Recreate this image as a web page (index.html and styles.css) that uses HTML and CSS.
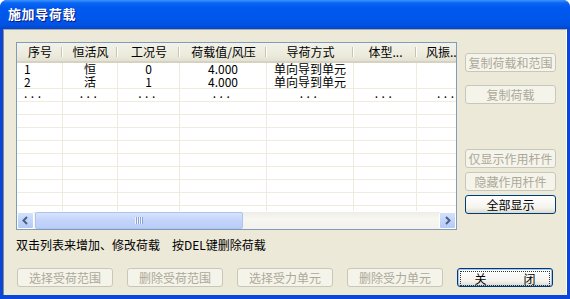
FILE: index.html
```html
<!DOCTYPE html>
<html lang="zh-CN">
<head>
    <meta charset="UTF-8">
    <title>施加导荷载</title>
    <link rel="stylesheet" href="styles.css">
</head>
<body>
<div class="window">
    <div class="title">施加导荷载</div>
    <div class="client">
        <div class="top">
            <div class="list">
                <div class="grid">
                    <div class="hd">序号</div>
                    <div class="hd">恒活风</div>
                    <div class="hd">工况号</div>
                    <div class="hd">荷载值/风压</div>
                    <div class="hd">导荷方式</div>
                    <div class="hd">体型...</div>
                    <div class="hd last">风振...</div>

                    <div class="cell first l">1</div>
                    <div class="cell first">恒</div>
                    <div class="cell first">0</div>
                    <div class="cell first">4.000</div>
                    <div class="cell first">单向导到单元</div>
                    <div class="cell first"></div>
                    <div class="cell first"></div>

                    <div class="cell l">2</div>
                    <div class="cell">活</div>
                    <div class="cell">1</div>
                    <div class="cell">4.000</div>
                    <div class="cell">单向导到单元</div>
                    <div class="cell"></div>
                    <div class="cell"></div>

                    <div class="cell l"><span class="dots">...</span></div>
                    <div class="cell"><span class="dots">...</span></div>
                    <div class="cell"><span class="dots">...</span></div>
                    <div class="cell"><span class="dots">...</span></div>
                    <div class="cell"><span class="dots">...</span></div>
                    <div class="cell"><span class="dots">...</span></div>
                    <div class="cell last"><span class="dots">...</span></div>
                </div>
                <div class="filler"></div>
                <div class="hscroll">
                    <div class="sbtn">
                        <svg width="7" height="9" viewBox="0 0 7 9"><path d="M5 1 L1.5 4.5 L5 8" fill="none" stroke="#4D6185" stroke-width="2"/></svg>
                    </div>
                    <div class="thumb"><span class="grip"></span></div>
                    <div class="track"></div>
                    <div class="sbtn">
                        <svg width="7" height="9" viewBox="0 0 7 9"><path d="M2 1 L5.5 4.5 L2 8" fill="none" stroke="#4D6185" stroke-width="2"/></svg>
                    </div>
                </div>
            </div>
            <div class="side">
                <button class="btn off s1">复制荷载和范围</button>
                <button class="btn off s2">复制荷载</button>
                <button class="btn off s3">仅显示作用杆件</button>
                <button class="btn off s4">隐藏作用杆件</button>
                <button class="btn s4">全部显示</button>
            </div>
        </div>
        <div class="hint">双击列表来增加、修改荷载<span class="gap">按DEL键删除荷载</span></div>
        <div class="actions">
            <button class="btn off wide">选择受荷范围</button>
            <button class="btn off wide">删除受荷范围</button>
            <button class="btn off wide">选择受力单元</button>
            <button class="btn off wide">删除受力单元</button>
            <button class="btn wide def"><span class="focus">关<i class="sp"></i>闭</span></button>
        </div>
    </div>
</div>
</body>
</html>
```

FILE: styles.css
```css
html, body{
    margin: 0;
    padding: 0;
    background: #fff;
}
body{
    font-family: "Noto Sans CJK SC", sans-serif;
    font-size: 12px;
}

.window{
    width: 570px;
    height: 299px;
    box-sizing: border-box;
    display: flex;
    flex-direction: column;
    border-radius: 7px 7px 0 0;
    background: #0A46D8;
    overflow: hidden;
}
.title{
    height: 29px;
    flex: none;
    box-sizing: border-box;
    padding: 5px 0 0 8px;
    color: #fff;
    font-size: 13px;
    font-weight: bold;
    letter-spacing: 0.6px;
    line-height: 18px;
    text-shadow: 1px 1px 0 #0A1883;
    background: linear-gradient(#3D93FF 0, #0A66F2 3px, #0058EE 8px, #0057EC 18px, #0052E2 25px, #0046D0 29px);
}
.client{
    flex: 1;
    margin: 0 3px 4px 3px;
    background: #ECE9D8;
    border-top: 1px solid #ACA899;
    border-left: 1px solid #8D8B80;
    border-right: 1px solid #fff;
    padding: 12px 0 0 12px;
    display: flex;
    flex-direction: column;
}

.top{
    display: flex;
    gap: 8px;
}
.list{
    width: 441px;
    height: 188px;
    box-sizing: border-box;
    border: 1px solid #7F9DB9;
    background: #fff;
    overflow: hidden;
    display: flex;
    flex-direction: column;
}
.grid{
    display: grid;
    grid-template-columns: 46px 55px 62px 87px 87px 63px 80px;
    width: 480px;
    flex: none;
}
.hd{
    height: 20px;
    box-sizing: border-box;
    line-height: 18px;
    text-align: center;
    color: #000;
    background: linear-gradient(#F3F2EA, #EBEADB 70%, #E4E1D2);
    border-bottom: 2px solid #D6D2C2;
    position: relative;
    white-space: nowrap;
}
.hd::after{
    content: "";
    position: absolute;
    right: 1px;
    top: 4px;
    bottom: 4px;
    width: 1px;
    background: #C7C5B2;
    box-shadow: 1px 0 0 #fff;
}
.hd.last{
    text-align: left;
    padding-left: 9px;
}
.cell{
    height: 13px;
    box-sizing: border-box;
    line-height: 12px;
    text-align: center;
    border-right: 1px solid #EFEBDE;
    border-bottom: 1px solid #EFEBDE;
    white-space: nowrap;
}
.cell.first{
    border-bottom-color: #fff;
}
.cell.l{
    text-align: left;
    padding-left: 7px;
}
.cell.last{
    text-align: left;
    padding-left: 20px;
}
.dots{
    letter-spacing: 3.5px;
    position: relative;
    top: -2px;
}
.filler{
    flex: 1;
    width: 480px;
    background:
        repeating-linear-gradient(to bottom, transparent 0, transparent 12px, #EFEBDE 12px, #EFEBDE 13px),
        #fff;
    position: relative;
}
.filler::before{
    content: "";
    position: absolute;
    inset: 0;
    background: linear-gradient(to right,
        transparent 45px, #EFEBDE 45px, #EFEBDE 46px,
        transparent 46px, transparent 100px, #EFEBDE 100px, #EFEBDE 101px,
        transparent 101px, transparent 162px, #EFEBDE 162px, #EFEBDE 163px,
        transparent 163px, transparent 249px, #EFEBDE 249px, #EFEBDE 250px,
        transparent 250px, transparent 336px, #EFEBDE 336px, #EFEBDE 337px,
        transparent 337px, transparent 399px, #EFEBDE 399px, #EFEBDE 400px,
        transparent 400px);
}

.hscroll{
    height: 17px;
    flex: none;
    display: flex;
    background: linear-gradient(#EEEDE5, #F7F6F1 40%, #F3F1EC);
    border-top: 1px solid #fff;
}
.sbtn{
    width: 17px;
    height: 17px;
    box-sizing: border-box;
    border: 1px solid #fff;
    border-radius: 2px;
    background: linear-gradient(#D3E1FD, #C0D2FA 60%, #B4C9F5);
    display: flex;
    align-items: center;
    justify-content: center;
    flex: none;
}
.thumb{
    width: 208px;
    margin-left: 1px;
    height: 17px;
    box-sizing: border-box;
    border: 1px solid #AEC3EF;
    border-radius: 2px;
    background: linear-gradient(#D7E3FC, #C3D4FB 50%, #BACEF8);
    display: flex;
    align-items: center;
    justify-content: center;
    flex: none;
}
.grip{
    width: 8px;
    height: 7px;
    background: repeating-linear-gradient(to right, #EEF4FE 0, #EEF4FE 1px, #8CA6DB 1px, #8CA6DB 2px);
}
.track{
    flex: 1;
}

.side{
    width: 91px;
    display: flex;
    flex-direction: column;
    padding-top: 11px;
}
.btn{
    height: 19px;
    box-sizing: border-box;
    padding: 0;
    margin: 0;
    font-family: inherit;
    font-size: 12px;
    line-height: 16px;
    color: #000;
    border: 1px solid #003C74;
    border-radius: 3px;
    background: linear-gradient(#FFFFFF, #F4F3EE 70%, #DCD8CB);
}
.btn.off{
    color: #ACA899;
    border-color: #C9C7BA;
    background: #F5F4EA;
}
.s2{
    margin-top: 13px;
}
.s3{
    margin-top: 45px;
}
.s4{
    margin-top: 4px;
}

.hint{
    margin-top: 8px;
    height: 14px;
    line-height: 14px;
    color: #000;
}
.gap{
    margin-left: 12px;
}

.actions{
    display: flex;
    gap: 14px;
    margin-top: 16px;
    padding-left: 1px;
}
.wide{
    width: 96px;
}
.def{
    box-shadow: inset 0 0 0 1px #A6C4F3;
    padding: 2px;
}
.focus{
    display: block;
    height: 13px;
    line-height: 13px;
    border: 1px dotted #333;
}
.sp{
    display: inline-block;
    width: 37px;
}
```
